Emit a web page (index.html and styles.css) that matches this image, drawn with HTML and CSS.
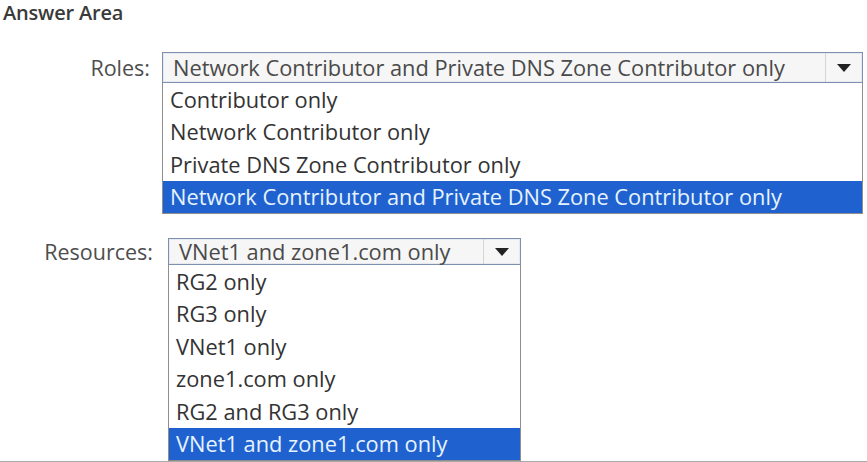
FILE: index.html
```html
<!DOCTYPE html>
<html>
<head>
<meta charset="utf-8">
<link rel="stylesheet" href="styles.css">
</head>
<body>
<div class="page">
  <h1 class="title">Answer Area</h1>
  <div class="field roles">
    <div class="label">Roles:</div>
    <div class="combo">
      <div class="select">
        <span class="value">Network Contributor and Private DNS Zone Contributor only</span>
        <span class="btn"><svg width="14" height="8" viewBox="0 0 14 8"><path d="M0 0H14L7 8Z" fill="#222"/></svg></span>
      </div>
      <ul class="list">
        <li>Contributor only</li>
        <li>Network Contributor only</li>
        <li>Private DNS Zone Contributor only</li>
        <li class="sel">Network Contributor and Private DNS Zone Contributor only</li>
      </ul>
    </div>
  </div>
  <div class="field resources">
    <div class="label">Resources:</div>
    <div class="combo">
      <div class="select">
        <span class="value">VNet1 and zone1.com only</span>
        <span class="btn"><svg width="14" height="8" viewBox="0 0 14 8"><path d="M0 0H14L7 8Z" fill="#222"/></svg></span>
      </div>
      <ul class="list">
        <li>RG2 only</li>
        <li>RG3 only</li>
        <li>VNet1 only</li>
        <li>zone1.com only</li>
        <li>RG2 and RG3 only</li>
        <li class="sel">VNet1 and zone1.com only</li>
      </ul>
    </div>
  </div>
  <div class="bottom-line"></div>
</div>
</body>
</html>
```

FILE: styles.css
```css
html, body {
  margin: 0;
  padding: 0;
  background: #ffffff;
}
body {
  font-family: "Open Sans", "Noto Sans", sans-serif;
  color: #333333;
  width: 867px;
  height: 462px;
  overflow: hidden;
}
.page {
  display: flex;
  flex-direction: column;
}
.title {
  margin: 0;
  padding-left: 3px;
  height: 52px;
  font-size: 20px;
  line-height: 26px;
  font-weight: 600;
  color: #3a3a3a;
  letter-spacing: -0.2px;
}
.field {
  display: flex;
  align-items: flex-start;
}
.label {
  font-size: 21.5px;
  color: #4e4e4e;
  text-align: right;
  display: flex;
  align-items: center;
  justify-content: flex-end;
}
.roles .label {
  width: 150px;
  height: 31px;
  margin-right: 12px;
}
.resources {
  margin-top: 24px;
}
.resources .label {
  width: 153px;
  height: 27px;
  margin-right: 15px;
}
.combo {
  display: flex;
  flex-direction: column;
}
.roles .combo { width: 701px; }
.resources .combo { width: 353px; }
.select {
  display: flex;
  align-items: center;
  border: 1px solid #7d90b0;
  box-shadow: inset 0 0 0 1px #e6e9ee;
  background: #f6f6f6;
  box-sizing: border-box;
}
.roles .select { height: 31px; }
.resources .select { height: 27px; }
.value {
  flex: 1;
  padding-left: 10px;
  font-size: 21.8px;
  line-height: 25px;
  color: #4a4a4a;
  white-space: nowrap;
}
.btn {
  width: 36px;
  align-self: stretch;
  border-left: 1px solid #d4d4d4;
  display: flex;
  align-items: center;
  justify-content: center;
}
.list {
  list-style: none;
  margin: 0;
  padding: 0;
  border: 1px solid #8e8e8e;
  border-top: none;
  background: #ffffff;
}
.list li {
  height: 32.5px;
  display: flex;
  align-items: center;
  padding-left: 7px;
  font-size: 21.8px;
  color: #333333;
  white-space: nowrap;
}
.list li.sel {
  background: #1f62cf;
  color: #e6f3ff;
}
.bottom-line {
  height: 2px;
  background: #a9a9a9;
}
```
